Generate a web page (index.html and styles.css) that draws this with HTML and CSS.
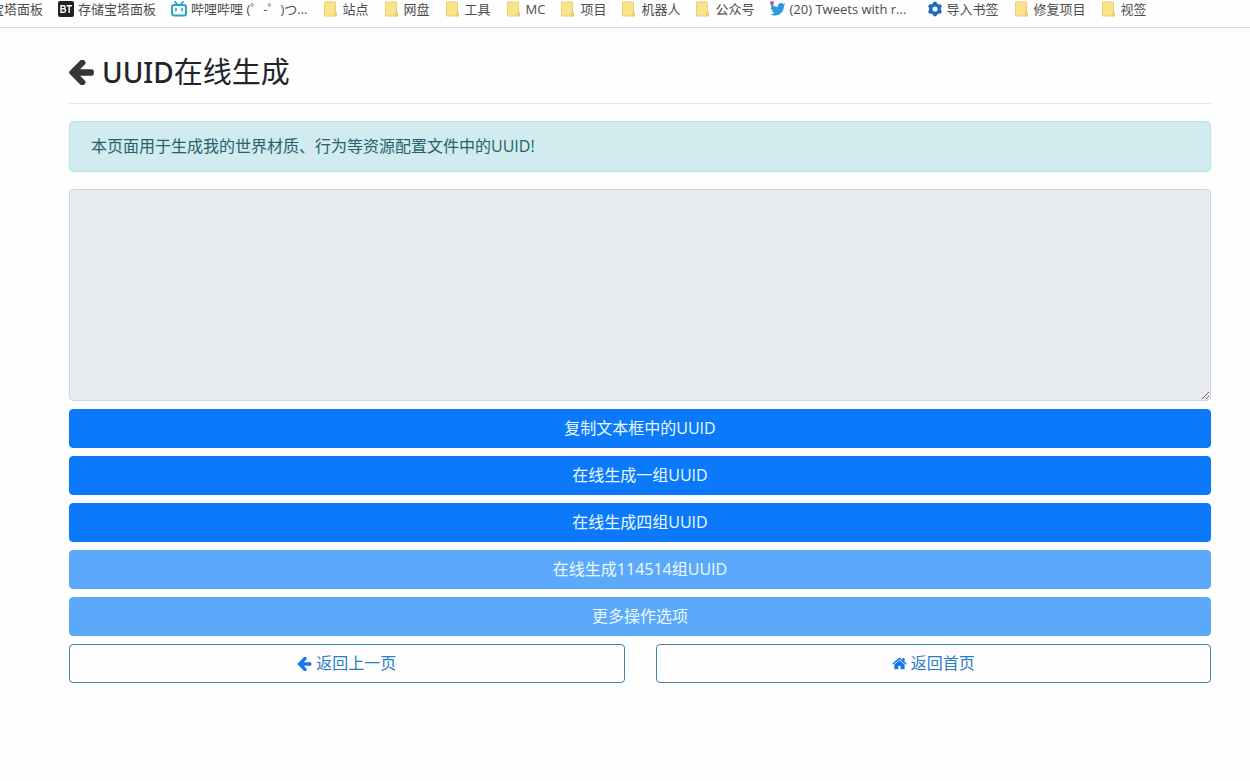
FILE: index.html
```html
<!DOCTYPE html>
<html lang="zh-CN">
<head>
<meta charset="utf-8">
<title>UUID在线生成</title>
<link rel="stylesheet" href="styles.css">
</head>
<body>
<svg class="sprite" aria-hidden="true">
  <symbol id="folder" viewBox="0 0 16 16"><path d="M1.500 1h11v10l1 1v3h-12z" fill="#fbe38a" stroke="#e6cf74"/><path d="M12.500 11l-1.200 1v3h2.200v-3z" fill="#f3d668" stroke="#dcc364" stroke-width=".6"/></symbol>
  <symbol id="arrow" viewBox="60 216 1480 1490"><path d="M1536 896v128q0 53-32.500 90.500t-84.500 37.500h-704l293 294q38 36 38 90t-38 90l-75 76q-37 37-90 37-52 0-91-37l-651-652q-37-37-37-90 0-52 37-91l651-650q38-38 91-38 52 0 90 38l75 74q38 38 38 91t-38 91l-293 293h704q52 0 84.500 37.500t32.500 90.500z" fill="currentColor"/></symbol>
  <symbol id="home" viewBox="60 200 1680 1480"><path d="M1472 992v480q0 26-19 45t-45 19h-384v-384h-256v384h-384q-26 0-45-19t-19-45v-480q0-1 .5-3t.5-3l575-474 575 474q1 2 1 6zm223-69l-62 74q-8 9-21 11h-3q-13 0-21-7l-692-577-692 577q-12 8-24 7-13-2-21-11l-62-74q-8-10-7-23.500t11-21.500l719-599q32-26 76-26t76 26l244 204v-195q0-14 9-23t23-9h192q14 0 23 9t9 23v408l219 182q10 8 11 21.500t-7 23.500z" fill="currentColor"/></symbol>
</svg>
<nav class="bookmarks" aria-label="书签栏">
  <a class="bookmark" href="#">宝塔面板</a>
  <a class="bookmark" href="#"><svg class="bookmark-icon" viewBox="0 0 16 16"><rect width="16" height="16" rx="2" fill="#222"/><path d="M3 4v8M3 4.700h2.500a1.500 1.500 0 0 1 0 3.100H3h2.800a1.700 1.700 0 0 1 0 3.500H3M8.500 4.700h5.500M11.200 4.700V12" fill="none" stroke="#fff" stroke-width="1.400"/></svg>存储宝塔面板</a>
  <a class="bookmark" href="#"><svg class="bookmark-icon" viewBox="0 0 16 16"><rect x="1" y="4" width="14" height="10.500" rx="2.200" fill="none" stroke="#28a5c9" stroke-width="2"/><path d="M4 .8l2.500 2.700M12 .8L9.500 3.500M5 7.500v2M11 7.500v2" stroke="#28a5c9" stroke-width="1.700" stroke-linecap="round"/></svg>哔哩哔哩 (゜-゜)つ...</a>
  <a class="bookmark" href="#"><svg class="bookmark-icon"><use href="#folder"/></svg>站点</a>
  <a class="bookmark" href="#"><svg class="bookmark-icon"><use href="#folder"/></svg>网盘</a>
  <a class="bookmark" href="#"><svg class="bookmark-icon"><use href="#folder"/></svg>工具</a>
  <a class="bookmark" href="#"><svg class="bookmark-icon"><use href="#folder"/></svg>MC</a>
  <a class="bookmark" href="#"><svg class="bookmark-icon"><use href="#folder"/></svg>项目</a>
  <a class="bookmark" href="#"><svg class="bookmark-icon"><use href="#folder"/></svg>机器人</a>
  <a class="bookmark" href="#"><svg class="bookmark-icon"><use href="#folder"/></svg>公众号</a>
  <a class="bookmark bookmark-wide" href="#"><svg class="bookmark-icon" viewBox="0 0 16 16"><path d="M15.500 3.600l-1.600 1.500c.2 5.600-4 9.400-8.800 9.400-1.700 0-3.300-.5-4.600-1.300 1.700.1 3.200-.4 4.400-1.400-1.400 0-2.500-1-2.900-2.100h1.300C1.800 9.300.9 8 .9 6.500l1.300.4C.8 5.700.6 4.100 1.400 2.700 3 4.700 5.300 5.800 7.900 6c-.5-2.300 1-4 3.100-4 1 0 1.800.4 2.400 1l1.900-.7-1.300 1.700z" fill="#299ddb"/><circle cx="2" cy="2" r="2" fill="#c9528f"/></svg>(20) Tweets with r...</a>
  <a class="bookmark" href="#"><svg class="bookmark-icon" viewBox="0 0 16 16"><circle cx="8" cy="8" r="4.300" fill="none" stroke="#1d68c6" stroke-width="3.400"/><path d="M8 .8v2.500M8 12.700v2.500M1.800 4.400L4 5.700M12 10.300l2.200 1.300M1.800 11.600L4 10.300M12 5.700l2.200-1.300" stroke="#1d68c6" stroke-width="3.400"/></svg>导入书签</a>
  <a class="bookmark" href="#"><svg class="bookmark-icon"><use href="#folder"/></svg>修复项目</a>
  <a class="bookmark" href="#"><svg class="bookmark-icon"><use href="#folder"/></svg>视签</a>
</nav>
<main class="page">
  <h1 class="title"><a class="back" href="#" aria-label="返回"><svg class="title-icon"><use href="#arrow"/></svg></a><span><span class="title-latin">UUID</span>在线生成</span></h1>
  <p class="alert">本页面用于生成我的世界材质、行为等资源配置文件中的UUID!</p>
  <form class="actions">
    <textarea class="output" aria-label="UUID" readonly></textarea>
    <button class="btn" type="button">复制文本框中的UUID</button>
    <button class="btn" type="button">在线生成一组UUID</button>
    <button class="btn" type="button">在线生成四组UUID</button>
    <button class="btn" type="button" disabled>在线生成114514组UUID</button>
    <button class="btn" type="button" disabled>更多操作选项</button>
    <div class="links">
      <a class="btn btn-outline" href="#"><svg class="btn-icon"><use href="#arrow"/></svg>返回上一页</a>
      <a class="btn btn-outline" href="#"><svg class="btn-icon"><use href="#home"/></svg>返回首页</a>
    </div>
  </form>
</main>
</body>
</html>
```
FILE: styles.css
```css
* {
  box-sizing: border-box;
}

body {
  margin: 0;
  background: #fefefe;
  color: #212529;
  font: 16px/24px "Open Sans", "Noto Sans CJK SC", sans-serif;
}

.sprite {
  position: absolute;
  width: 0;
  height: 0;
}

.bookmarks {
  display: flex;
  gap: 15px;
  margin-left: -9px;
  padding-bottom: 9px;
  border-bottom: 1px solid #ddd9e0;
  overflow: hidden;
  font-size: 13px;
  line-height: 18px;
  white-space: nowrap;
}

.bookmark {
  display: flex;
  flex: none;
  align-items: center;
  gap: 4px;
  color: #4c4c4e;
  text-decoration: none;
}

.bookmark-wide {
  min-width: 142px;
}

.bookmark-icon {
  width: 16px;
  height: 16px;
}

.page {
  padding: 24px 39px 24px 69px;
}

.title {
  display: flex;
  align-items: center;
  gap: 8px;
  margin: 0 0 17px;
  padding-bottom: 11px;
  border-bottom: 1px solid #e5e6e8;
  font-size: 29px;
  font-weight: 400;
  line-height: 40px;
}

.title-latin {
  font-family: "Noto Sans", sans-serif;
  font-size: 28px;
  font-weight: 500;
}

.back {
  display: flex;
  color: #343639;
}

.title-icon {
  width: 25px;
  height: 25px;
}

.alert {
  margin: 0 0 17px;
  padding: 12px 21px;
  border: 1px solid #bfe2e7;
  border-radius: 4px;
  background: #d1ebef;
  color: #27626b;
  line-height: 25px;
}

.actions {
  display: flex;
  flex-direction: column;
  gap: 8px;
}

.output {
  display: block;
  width: 100%;
  height: 212px;
  padding: 6px 12px;
  border: 1px solid #d0d4d9;
  border-radius: 4px;
  background: #e8ebef;
  font: inherit;
  resize: vertical;
}

.btn {
  display: flex;
  align-items: center;
  justify-content: center;
  gap: 4px;
  padding: 6px 12px;
  border: 1px solid #0c79fb;
  border-radius: 4px;
  background: #0c79fb;
  color: #e9fbff;
  font: inherit;
  line-height: 25px;
  text-decoration: none;
}

.btn:disabled {
  border-color: #5ca9fb;
  background: #5ca9fb;
}

.links {
  display: grid;
  grid-template-columns: 1fr 1fr;
  gap: 31px;
}

.btn-outline {
  border-color: #3c86ad;
  background: #fefefe;
  color: #2a7cc9;
}

.btn-icon {
  width: 15px;
  height: 14px;
  color: #1677e6;
}
```
